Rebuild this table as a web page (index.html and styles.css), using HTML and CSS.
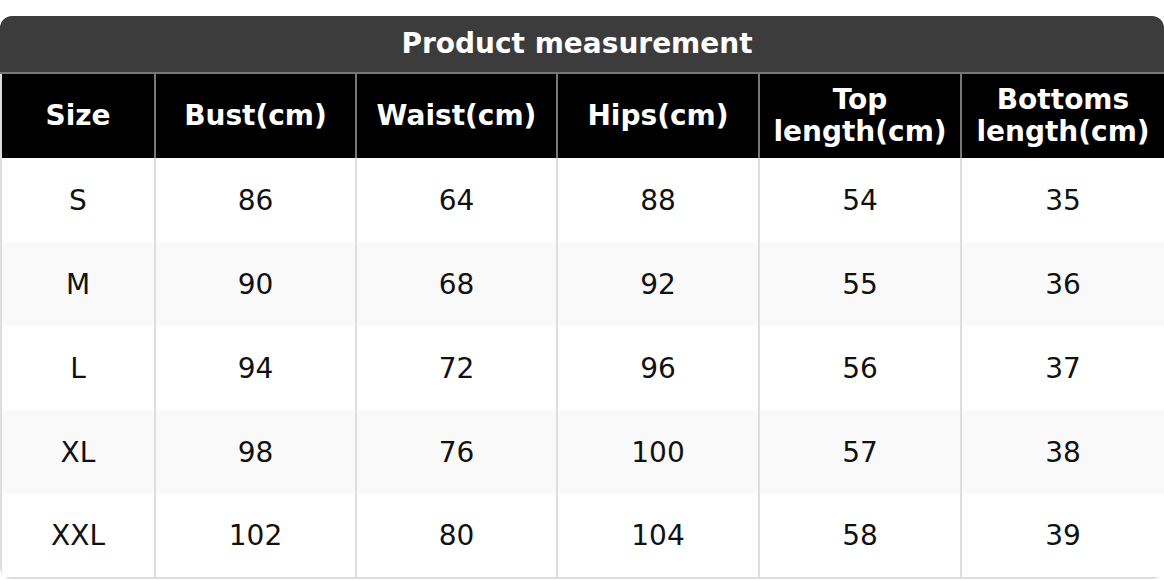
FILE: index.html
```html
<!DOCTYPE html>
<html>
<head>
<meta charset="utf-8">
<link rel="stylesheet" href="styles.css">
</head>
<body>
<div class="chart">
  <div class="title">Product measurement</div>
  <table class="sizes">
    <colgroup>
      <col class="c1"><col class="c2"><col class="c3"><col class="c4"><col class="c5"><col class="c6">
    </colgroup>
    <thead>
      <tr><th>Size</th><th>Bust(cm)</th><th>Waist(cm)</th><th>Hips(cm)</th><th>Top<br>length(cm)</th><th>Bottoms<br>length(cm)</th></tr>
    </thead>
    <tbody>
      <tr><td>S</td><td>86</td><td>64</td><td>88</td><td>54</td><td>35</td></tr>
      <tr><td>M</td><td>90</td><td>68</td><td>92</td><td>55</td><td>36</td></tr>
      <tr><td>L</td><td>94</td><td>72</td><td>96</td><td>56</td><td>37</td></tr>
      <tr><td>XL</td><td>98</td><td>76</td><td>100</td><td>57</td><td>38</td></tr>
      <tr><td>XXL</td><td>102</td><td>80</td><td>104</td><td>58</td><td>39</td></tr>
    </tbody>
  </table>
</div>
</body>
</html>
```
FILE: styles.css
```css
html, body {
  margin: 0;
  padding: 0;
  background: #ffffff;
}
body {
  font-family: "DejaVu Sans", sans-serif;
  padding-top: 16px;
}
.chart {
  width: 1164px;
  border-radius: 12px;
  overflow: hidden;
  box-sizing: border-box;
}
.title {
  background: #3c3c3c;
  color: #ffffff;
  font-weight: bold;
  font-size: 28px;
  line-height: 32px;
  text-align: center;
  padding: 12px 10px 12px 0;
  border-bottom: 2px solid #777777;
}
.sizes {
  width: 1164px;
  border-collapse: collapse;
  table-layout: fixed;
}
.c1 { width: 154px; }
.c2 { width: 201px; }
.c3 { width: 201px; }
.c4 { width: 202px; }
.c5 { width: 202px; }
.c6 { width: 204px; }
.sizes th {
  background: #000000;
  color: #ffffff;
  font-weight: bold;
  font-size: 28px;
  line-height: 32px;
  height: 84px;
  padding: 0;
  border-left: 2px solid #777777;
  border-right: 2px solid #777777;
  box-sizing: border-box;
}
.sizes th:first-child { border-left-color: #dddddd; }
.sizes th:last-child { border-right-color: #dddddd; }
.sizes td {
  font-size: 28px;
  color: #111111;
  text-align: center;
  height: 84px;
  padding: 0;
  border: 2px solid #dddddd;
  border-top: none;
  border-bottom: none;
  box-sizing: border-box;
}
.sizes tbody tr:nth-child(even) td {
  background: #f9f9f9;
}
.sizes tbody tr:last-child td {
  border-bottom: 2px solid #dddddd;
}
```
